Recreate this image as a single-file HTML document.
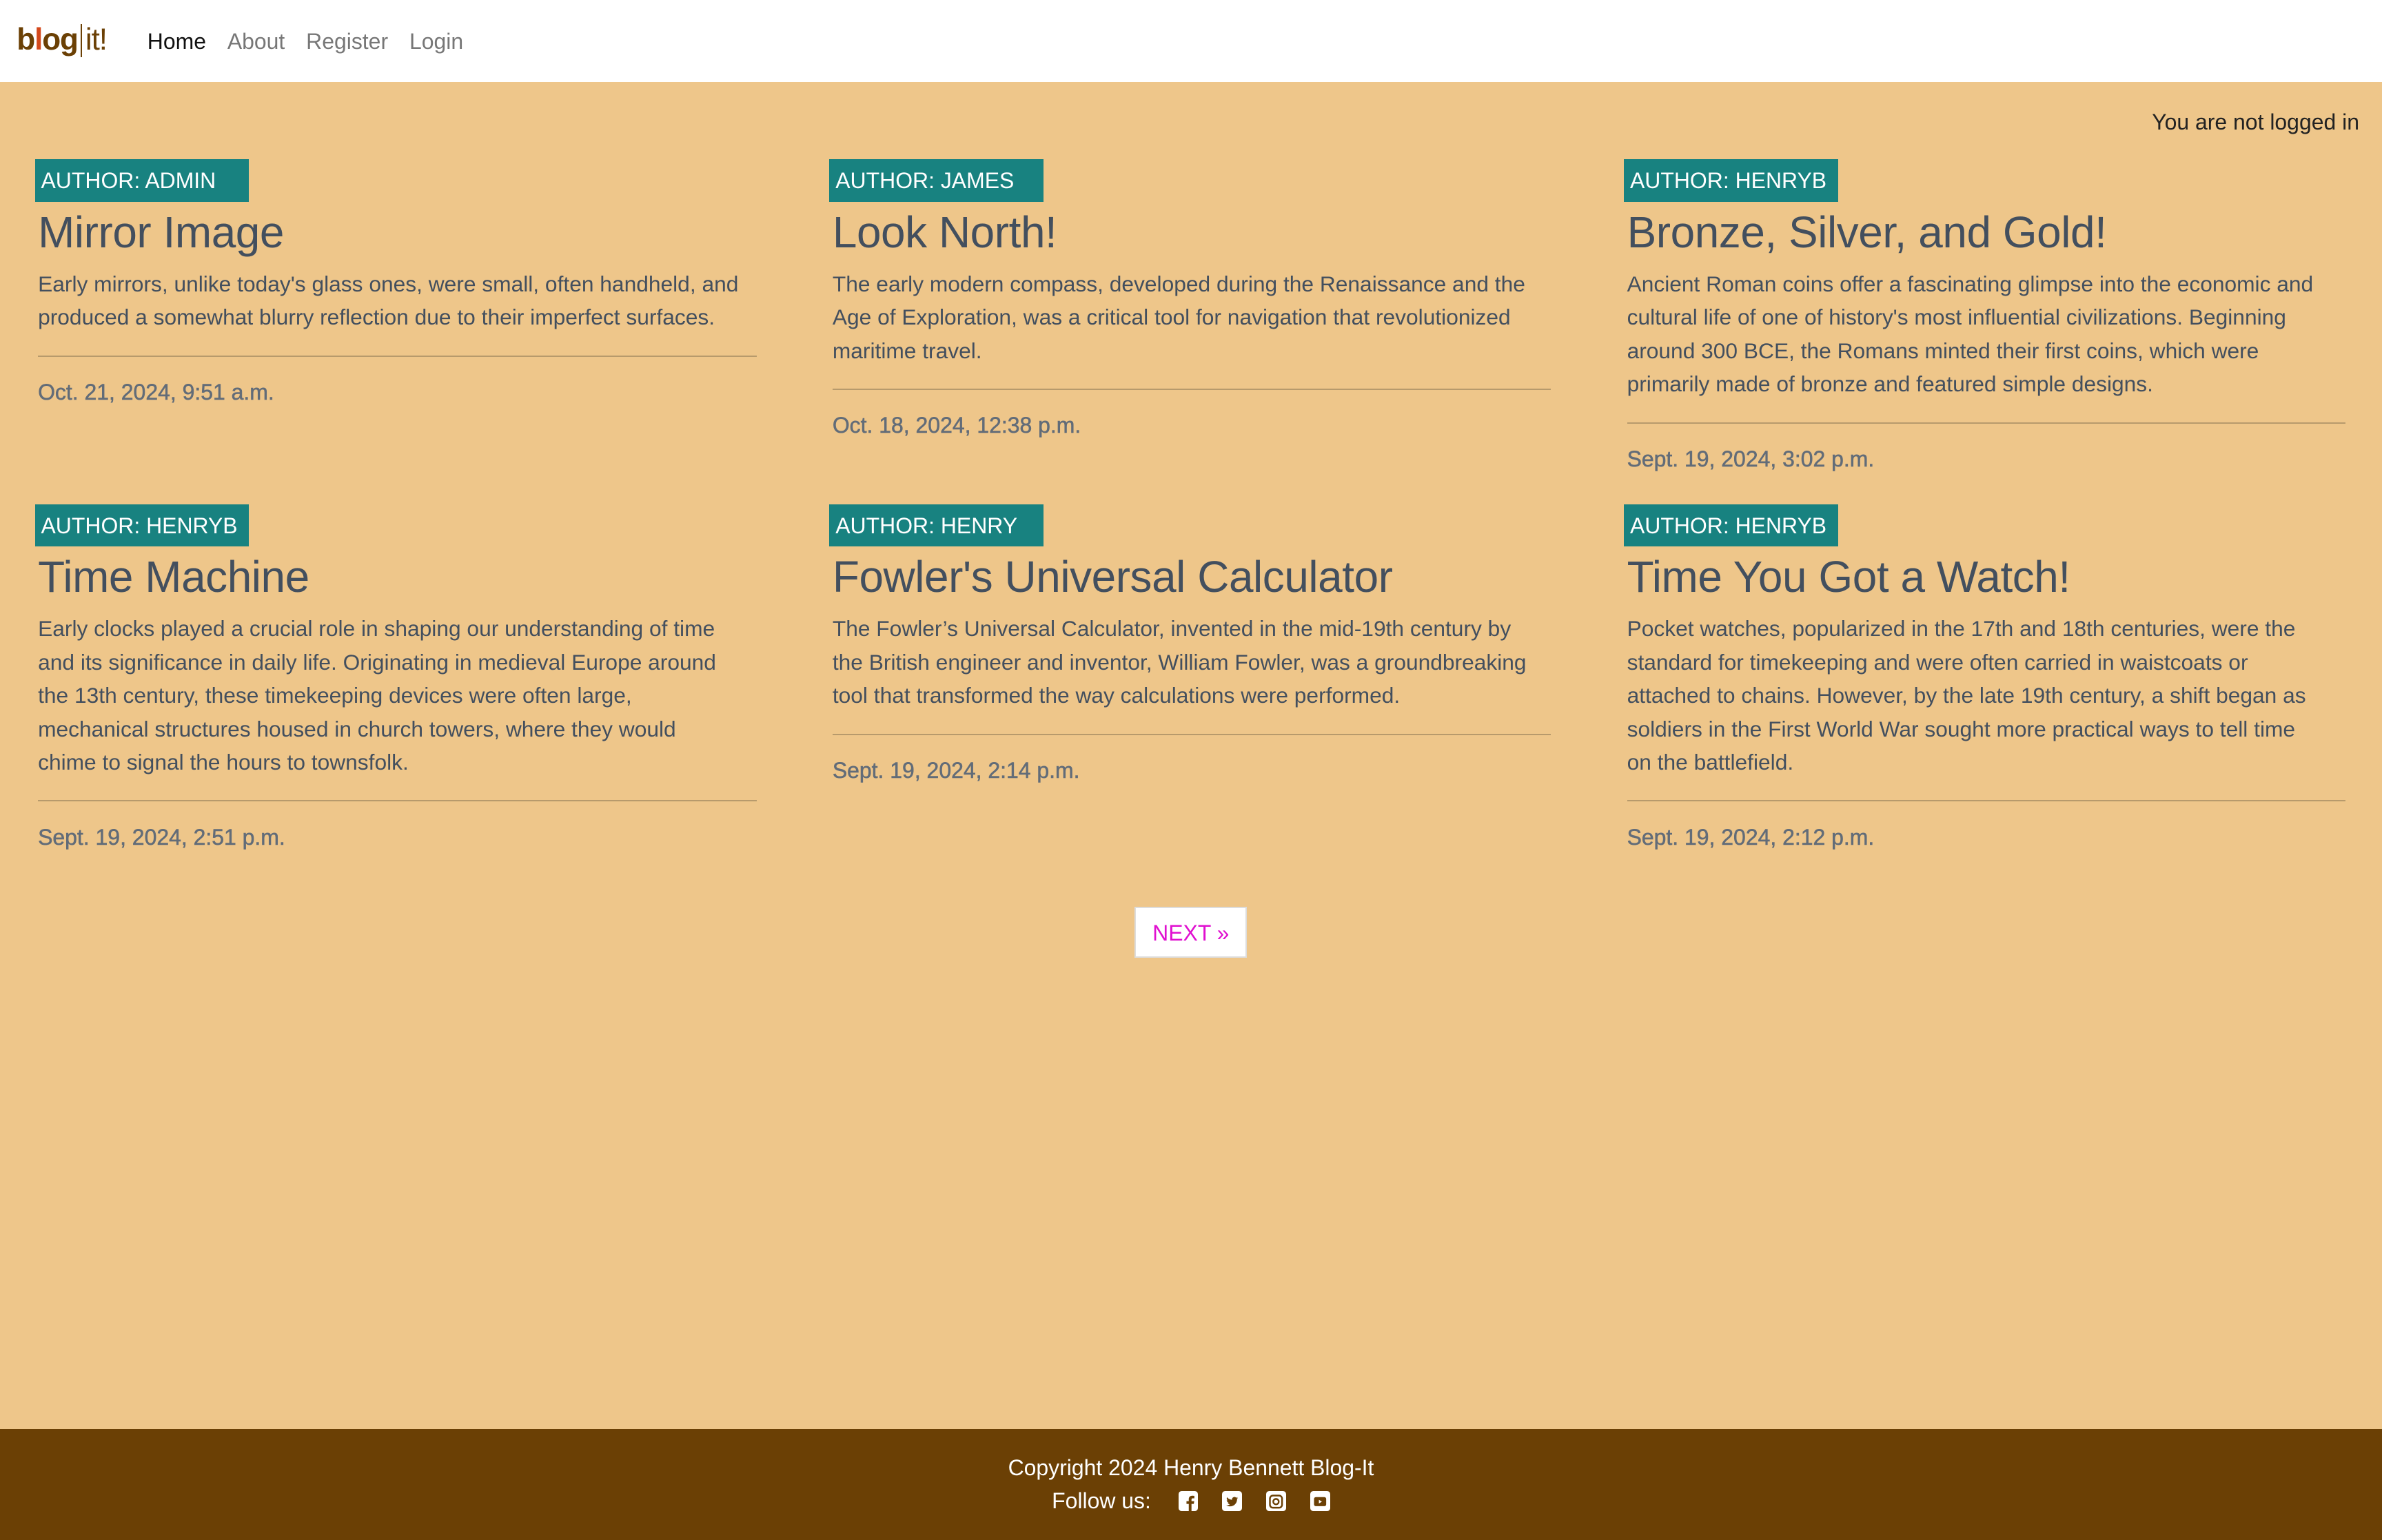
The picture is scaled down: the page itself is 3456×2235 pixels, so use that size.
<!DOCTYPE html>
<html><head><meta charset="utf-8">
<style>
html,body{margin:0;padding:0;}
body{width:1568px;height:1014px;zoom:2.2041;background:#eec68a;font-family:"Liberation Sans",sans-serif;position:relative;overflow:hidden;}
.nav{position:absolute;left:0;top:0;width:1568px;height:54px;background:#fff;}
.logo{position:absolute;left:11px;top:15px;font-size:20px;font-weight:bold;color:#6b4005;letter-spacing:-0.5px;}
.logo .l{color:#d4481b}
.logo .bar{display:inline-block;width:1px;height:22px;background:#6b4005;vertical-align:-5px;margin:0 2px 0 2px}
.logo .it{font-weight:normal}
.links{position:absolute;left:97px;top:19px;font-size:14.5px;color:#777;}
.links span{margin-right:14px}
.links .a{color:#111}
.status{position:absolute;right:15px;top:72px;font-size:14.5px;color:#222;}
.card{position:absolute;width:473px;}
.badge{display:inline-block;background:#188280;color:#fff;font-size:14.5px;height:28px;line-height:29px;padding:0 4px;width:133px;margin-left:-2px}
.card h2{margin:3px 0 0 0;font-size:29px;font-weight:normal;color:#434f5e;line-height:34px;letter-spacing:-0.2px}
.card p{margin:6px 0 0 0;font-size:14.4px;line-height:22px;color:#434f5e;white-space:nowrap}
.card hr{border:0;border-top:1px solid #b79a6c;margin:14px 0 0 0}
.card .d{margin-top:15px;font-size:14.5px;color:#626c78;-webkit-text-stroke:0.25px #626c78}
.next{position:absolute;left:747px;top:597px;width:72px;height:32px;background:#fff;border:1px solid #ddd;color:#e010d0;font-size:14.5px;text-align:center;line-height:33px;}
.foot{position:absolute;left:0;top:941px;width:1568px;height:73px;background:#6b4005;color:#fff;font-size:14.5px;text-align:center;}
.foot .c{position:absolute;top:17px;width:100%}
.foot .f{position:absolute;top:39px;width:100%}
.ic{display:inline-block;width:13px;height:13px;background:#fff;border-radius:2px;vertical-align:-2px;margin-left:16px;position:relative}
</style></head><body>
<div class="nav">
 <div class="logo">b<span class="l">l</span>og<span class="bar"></span><span class="it">it!</span></div>
 <div class="links"><span class="a">Home</span><span>About</span><span>Register</span><span>Login</span></div>
</div>
<div class="status">You are not logged in</div>

<div class="card" style="left:25px;top:105px"><span class="badge">AUTHOR: ADMIN</span><h2>Mirror Image</h2><p>Early mirrors, unlike today's glass ones, were small, often handheld, and<br>produced a somewhat blurry reflection due to their imperfect surfaces.</p><hr><div class="d">Oct. 21, 2024, 9:51 a.m.</div></div>

<div class="card" style="left:548px;top:105px"><span class="badge">AUTHOR: JAMES</span><h2>Look North!</h2><p>The early modern compass, developed during the Renaissance and the<br>Age of Exploration, was a critical tool for navigation that revolutionized<br>maritime travel.</p><hr><div class="d">Oct. 18, 2024, 12:38 p.m.</div></div>

<div class="card" style="left:1071px;top:105px"><span class="badge">AUTHOR: HENRYB</span><h2>Bronze, Silver, and Gold!</h2><p>Ancient Roman coins offer a fascinating glimpse into the economic and<br>cultural life of one of history's most influential civilizations. Beginning<br>around 300 BCE, the Romans minted their first coins, which were<br>primarily made of bronze and featured simple designs.</p><hr><div class="d">Sept. 19, 2024, 3:02 p.m.</div></div>

<div class="card" style="left:25px;top:332px"><span class="badge">AUTHOR: HENRYB</span><h2>Time Machine</h2><p>Early clocks played a crucial role in shaping our understanding of time<br>and its significance in daily life. Originating in medieval Europe around<br>the 13th century, these timekeeping devices were often large,<br>mechanical structures housed in church towers, where they would<br>chime to signal the hours to townsfolk.</p><hr><div class="d">Sept. 19, 2024, 2:51 p.m.</div></div>

<div class="card" style="left:548px;top:332px"><span class="badge">AUTHOR: HENRY</span><h2>Fowler's Universal Calculator</h2><p>The Fowler’s Universal Calculator, invented in the mid-19th century by<br>the British engineer and inventor, William Fowler, was a groundbreaking<br>tool that transformed the way calculations were performed.</p><hr><div class="d">Sept. 19, 2024, 2:14 p.m.</div></div>

<div class="card" style="left:1071px;top:332px"><span class="badge">AUTHOR: HENRYB</span><h2>Time You Got a Watch!</h2><p>Pocket watches, popularized in the 17th and 18th centuries, were the<br>standard for timekeeping and were often carried in waistcoats or<br>attached to chains. However, by the late 19th century, a shift began as<br>soldiers in the First World War sought more practical ways to tell time<br>on the battlefield.</p><hr><div class="d">Sept. 19, 2024, 2:12 p.m.</div></div>

<div class="next">NEXT »</div>

<div class="foot">
 <div class="c">Copyright 2024 Henry Bennett Blog-It</div>
 <div class="f">Follow us:<span class="ic" style="margin-left:18px"><svg width="13" height="13" viewBox="0 0 13 13"><path d="M8.5 13V8H10l.3-1.8H8.5V5.2c0-.5.2-.9.9-.9h1V2.7c-.3 0-.8-.1-1.4-.1-1.4 0-2.3.8-2.3 2.3v1.3H5.2V8h1.5v5z" fill="#6b4005"/></svg></span><span class="ic"><svg width="13" height="13" viewBox="0 0 13 13"><path d="M10.5 4.2c-.3.1-.6.2-.9.2.3-.2.6-.5.7-.9-.3.2-.6.3-1 .4a1.6 1.6 0 0 0-2.7 1.4c-1.3-.1-2.5-.7-3.3-1.7-.4.7-.2 1.6.5 2.1-.3 0-.5-.1-.7-.2 0 .8.5 1.4 1.3 1.6-.2.1-.5.1-.7 0 .2.6.8 1.1 1.5 1.1-.7.5-1.5.8-2.4.7.7.5 1.6.7 2.5.7 3 0 4.7-2.5 4.6-4.8.3-.2.5-.4.6-.6z" fill="#6b4005"/></svg></span><span class="ic"><svg width="13" height="13" viewBox="0 0 13 13"><rect x="2.5" y="2.5" width="8" height="8" rx="2" fill="none" stroke="#6b4005" stroke-width="1.1"/><circle cx="6.5" cy="6.5" r="1.8" fill="none" stroke="#6b4005" stroke-width="1.1"/></svg></span><span class="ic"><svg width="13" height="13" viewBox="0 0 13 13"><rect x="2.5" y="3.5" width="8" height="6" rx="1.2" fill="#6b4005"/><path d="M5.7 5.3v2.4l2-1.2z" fill="#fff"/></svg></span></div>
</div>
</body></html>
